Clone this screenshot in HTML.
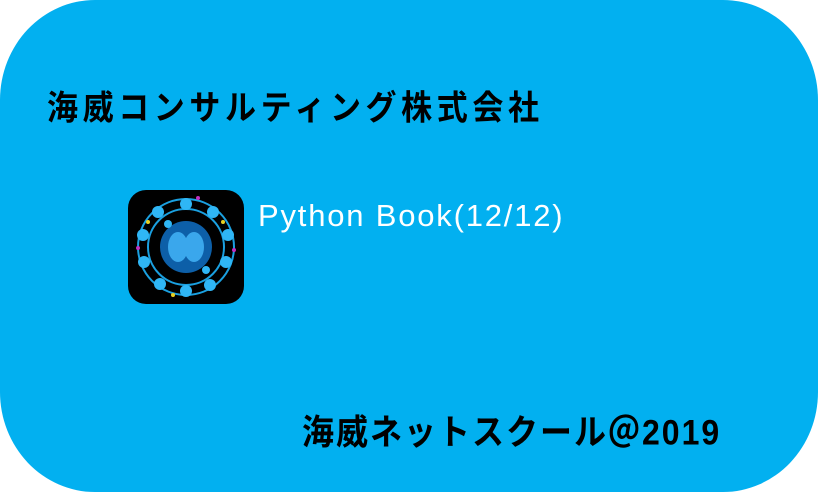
<!DOCTYPE html>
<html><head><meta charset="utf-8"><style>
html,body{margin:0;padding:0;width:820px;height:490px;background:#fff;overflow:hidden}
.card{position:absolute;left:0;top:0;width:818px;height:492px;background:#02b0f0;border-radius:95px/100px}
.t{position:absolute;font-family:"Liberation Sans","Noto Sans CJK JP",sans-serif;font-weight:bold;color:#000;white-space:nowrap}
.p{position:absolute;left:258px;top:198px;font-family:"Liberation Sans",sans-serif;font-size:31px;letter-spacing:1.8px;color:#fff;white-space:nowrap}
.icon{position:absolute;left:128px;top:190px;width:116px;height:114px;background:#000;border-radius:18px;overflow:hidden}
</style></head><body>
<div class="card"></div>
<div class="t" style="left:47px;top:80px;font-size:31px;letter-spacing:4.6px;transform:scaleY(1.1);transform-origin:left top">海威コンサルティング株式会社</div>
<div class="p">Python Book(12/12)</div>
<div class="icon"><svg width="116" height="114" viewBox="0 0 116 114">
<circle cx="58" cy="57" r="48" fill="none" stroke="#1aa0e0" stroke-width="2"/>
<circle cx="58" cy="57" r="38" fill="none" stroke="#1aa0e0" stroke-width="2"/>
<circle cx="58" cy="57" r="26" fill="#0d5fa8"/>
<ellipse cx="50" cy="57" rx="10" ry="15" fill="#3aa7ec"/>
<ellipse cx="66" cy="57" rx="10" ry="15" fill="#3aa7ec"/>
<g fill="#2fb6f5">
<circle cx="30" cy="22" r="6"/><circle cx="58" cy="14" r="6"/><circle cx="85" cy="22" r="6"/>
<circle cx="100" cy="45" r="6"/><circle cx="98" cy="72" r="6"/><circle cx="82" cy="95" r="6"/>
<circle cx="58" cy="101" r="6"/><circle cx="32" cy="94" r="6"/><circle cx="16" cy="72" r="6"/>
<circle cx="15" cy="45" r="6"/><circle cx="40" cy="34" r="4"/><circle cx="78" cy="80" r="4"/>
</g>
<g fill="#e8d020"><circle cx="20" cy="32" r="2"/><circle cx="95" cy="32" r="2"/><circle cx="45" cy="105" r="2"/></g>
<g fill="#c030c0"><circle cx="70" cy="8" r="2"/><circle cx="10" cy="58" r="2"/><circle cx="106" cy="60" r="2"/></g>
</svg></div>
<div class="t" style="left:302px;top:405px;font-size:32px;letter-spacing:2px;transform:scaleY(1.1);transform-origin:left top">海威ネットスクール＠2019</div>
</body></html>
